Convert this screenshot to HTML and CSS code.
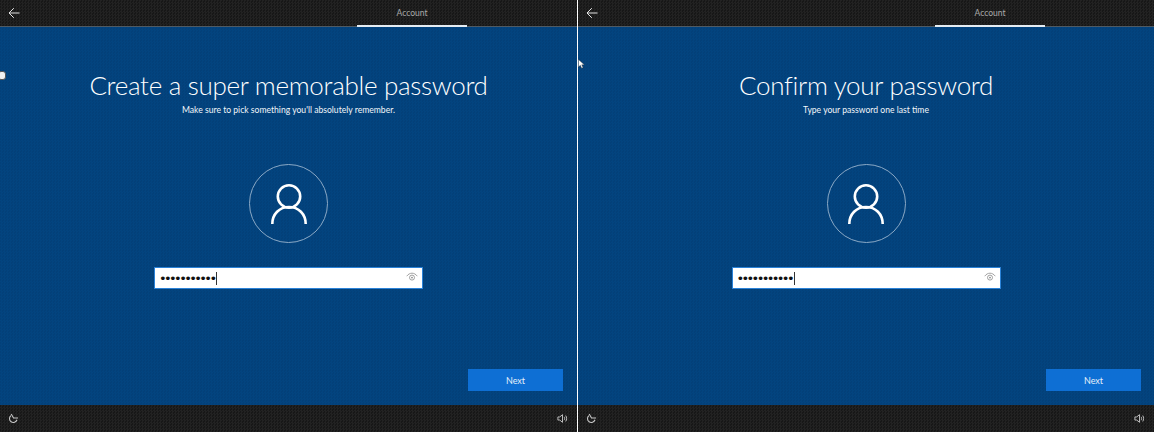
FILE: index.html
```html
<!DOCTYPE html>
<html lang="en">
<head>
  <meta charset="UTF-8">
  <meta name="viewport" content="width=device-width, initial-scale=1.0">
  <title>Account - Password</title>
  <link rel="stylesheet" href="styles.css">
</head>
<body>
  <svg class="sprites" width="0" height="0" aria-hidden="true">
    <symbol id="icon-back" viewBox="0 0 12 12">
      <path d="M11.5 6H1M5.8 1.2 1 6l4.8 4.800" fill="none" stroke="currentColor" stroke-width="1"/>
    </symbol>
    <symbol id="icon-user" viewBox="0 0 36 40">
      <circle cx="18" cy="12.500" r="11.200" fill="none" stroke="currentColor" stroke-width="2.600"/>
      <path d="M1.300 40C1.300 30 8.500 23 18 23s16.700 7 16.700 17" fill="none" stroke="currentColor" stroke-width="2.600"/>
    </symbol>
    <symbol id="icon-eye" viewBox="0 0 12 10">
      <path d="M.7 4.200C2.200 2.200 4 1.200 6 1.200s3.800 1 5.300 3" fill="none" stroke="currentColor" stroke-width=".8"/>
      <circle cx="6" cy="5.600" r="2.500" fill="none" stroke="currentColor" stroke-width=".8"/>
      <circle cx="6" cy="5.600" r=".9" fill="currentColor"/>
    </symbol>
    <symbol id="icon-ease" viewBox="0 0 12 12">
      <path d="M3.200 2.800A4.200 4.200 0 1 0 9.800 7.400" fill="none" stroke="currentColor" stroke-width="1.200"/>
      <path d="M3.500 1 6 5.400h5" fill="none" stroke="currentColor" stroke-width="1.200"/>
    </symbol>
    <symbol id="icon-volume" viewBox="0 0 12 12">
      <path d="M1 4.300h2L6 1.800v8.400L3 7.700H1z" fill="none" stroke="currentColor" stroke-width="1"/>
      <path d="M7.800 4.200c.7 1.100.7 2.500 0 3.600M9.500 2.800c1.300 2 1.300 4.400 0 6.400" fill="none" stroke="currentColor" stroke-width="1"/>
    </symbol>
    <symbol id="icon-cursor" viewBox="0 0 9 13">
      <path d="M.5.500v10l2.500-2.300 1.700 3.800 1.800-.8L4.800 7.600h3.400z" fill="#fff" stroke="#333" stroke-width=".5"/>
    </symbol>
  </svg>

  <div class="split">
    <section class="pane">
      <header class="top-bar">
        <svg class="back-icon"><use href="#icon-back"/></svg>
        <div class="tab">Account</div>
      </header>
      <main class="content">
        <h1>Create a super memorable password</h1>
        <p class="subtitle">Make sure to pick something you'll absolutely remember.</p>
        <div class="avatar"><svg class="user-icon"><use href="#icon-user"/></svg></div>
        <div class="password-field">
          <span class="dots">•••••••••••</span><span class="caret"></span>
          <svg class="eye-icon"><use href="#icon-eye"/></svg>
        </div>
        <button class="next-button">Next</button>
      </main>
      <footer class="bottom-bar">
        <svg class="foot-icon"><use href="#icon-ease"/></svg>
        <svg class="foot-icon"><use href="#icon-volume"/></svg>
      </footer>
      <div class="cursor-blob"></div>
    </section>

    <section class="pane">
      <header class="top-bar">
        <svg class="back-icon"><use href="#icon-back"/></svg>
        <div class="tab">Account</div>
      </header>
      <main class="content">
        <h1>Confirm your password</h1>
        <p class="subtitle">Type your password one last time</p>
        <div class="avatar"><svg class="user-icon"><use href="#icon-user"/></svg></div>
        <div class="password-field">
          <span class="dots">•••••••••••</span><span class="caret"></span>
          <svg class="eye-icon"><use href="#icon-eye"/></svg>
        </div>
        <button class="next-button">Next</button>
      </main>
      <footer class="bottom-bar">
        <svg class="foot-icon"><use href="#icon-ease"/></svg>
        <svg class="foot-icon"><use href="#icon-volume"/></svg>
      </footer>
      <svg class="cursor-arrow"><use href="#icon-cursor"/></svg>
    </section>
  </div>
</body>
</html>
```

FILE: styles.css
```css
* {
  box-sizing: border-box;
  margin: 0;
  padding: 0;
}

html, body {
  height: 100%;
  overflow: hidden;
}

body {
  font-family: 'Lato', sans-serif;
  background: #1b1b1b;
  color: #fff;
}

.sprites {
  position: absolute;
}

.split {
  display: flex;
  height: 432px;
}

.pane {
  flex: 1;
  position: relative;
  display: flex;
  flex-direction: column;
  min-width: 0;
}

.pane:first-child {
  flex: 0 0 578px;
  border-right: 1px solid #fff;
}

.pane:first-child .next-button {
  margin-right: 14px;
}

.top-bar {
  height: 27px;
  flex: none;
  position: relative;
  padding-left: 357px;
  background: #1b1b1b repeating-conic-gradient(#222 0 25%, #171717 0 50%) 0 0 / 3px 3px;
  border-bottom: 1px solid #4f5a63;
}

.back-icon {
  position: absolute;
  left: 8px;
  top: 7px;
  width: 12px;
  height: 12px;
  color: #e4e4e4;
}

.tab {
  width: 110px;
  height: 27px;
  padding-top: 7px;
  border-bottom: 2px solid #e6edf3;
  font-size: 8.500px;
  line-height: 13px;
  text-align: center;
  color: #a9a9a9;
}

.content {
  flex: 1;
  display: flex;
  flex-direction: column;
  align-items: center;
  background: #03427c repeating-conic-gradient(#03447f 0 25%, #034079 0 50%) 0 0 / 3px 3px;
  padding-top: 40px;
}

h1 {
  font-size: 26px;
  font-weight: 300;
  line-height: 36px;
  letter-spacing: -.3px;
  color: #fff;
}

.subtitle {
  font-size: 8.600px;
  line-height: 12px;
  margin-top: 1px;
  color: #f2f6fa;
}

.avatar {
  width: 79px;
  height: 79px;
  margin-top: 48px;
  border: 1px solid #8ba9c6;
  border-radius: 50%;
  display: flex;
  align-items: center;
  justify-content: center;
}

.user-icon {
  width: 36px;
  height: 40px;
}

.password-field {
  width: 269px;
  height: 22px;
  margin-top: 24px;
  padding-left: 4px;
  display: flex;
  align-items: center;
  background: #fff;
  border: 1px solid #2a82d8;
  color: #111;
}

.dots {
  font-family: 'DejaVu Sans', sans-serif;
  font-size: 13px;
  letter-spacing: -2.630px;
}

.caret {
  width: 1px;
  height: 13px;
  margin-left: 2px;
  background: #333;
}

.eye-icon {
  width: 12px;
  height: 10px;
  margin-left: auto;
  margin-right: 4px;
  margin-bottom: 3px;
  color: #8a8a8a;
}

.next-button {
  width: 95px;
  height: 22px;
  margin-top: auto;
  margin-bottom: 14px;
  align-self: flex-end;
  margin-right: 13px;
  border: none;
  background: #0e6fd4;
  color: #e6f0fa;
  font-family: 'Lato', sans-serif;
  font-size: 9px;
}

.bottom-bar {
  height: 27px;
  flex: none;
  display: flex;
  align-items: center;
  justify-content: space-between;
  padding: 0 9px 0 8px;
  background: #1b1b1b repeating-conic-gradient(#222 0 25%, #171717 0 50%) 0 0 / 3px 3px;
}

.foot-icon {
  width: 11px;
  height: 11px;
  color: #c8c8c8;
}

.cursor-blob {
  position: absolute;
  left: -2px;
  top: 71px;
  width: 8px;
  height: 9px;
  border-radius: 3px;
  background: #f1f1f1;
  border: 1px solid #555;
}

.cursor-arrow {
  position: absolute;
  left: 0;
  top: 59px;
  width: 7px;
  height: 10px;
}
```
